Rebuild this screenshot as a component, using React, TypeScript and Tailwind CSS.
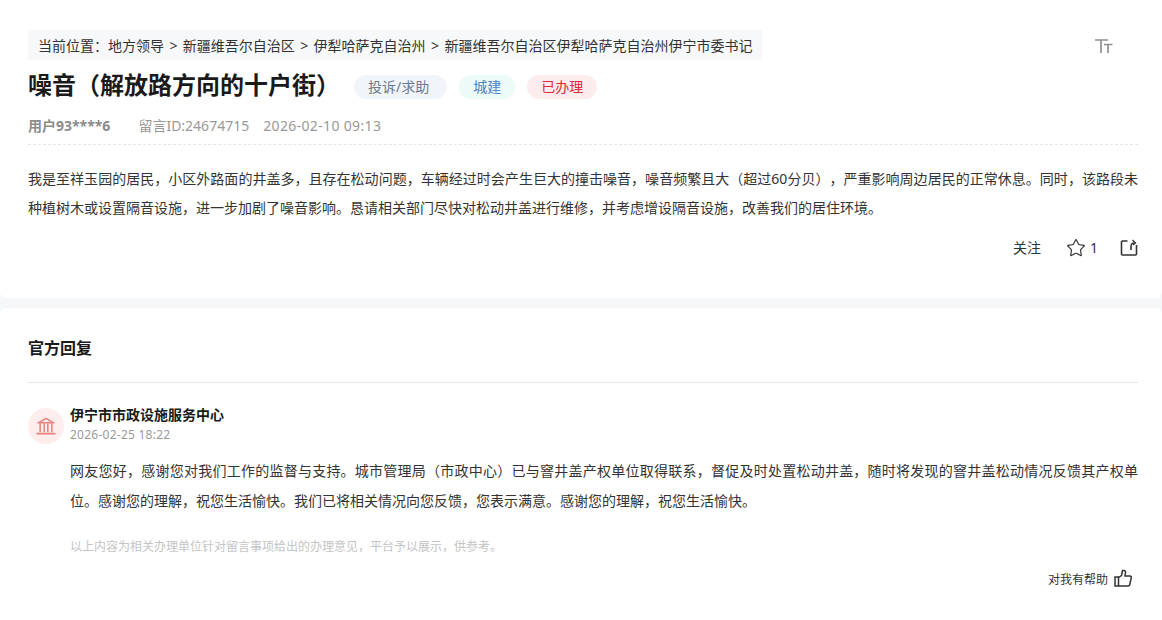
import { Star } from "lucide-react";

const font = { fontFamily: '"Noto Sans", "Noto Sans CJK SC", sans-serif' };

function Crumb({ children }: { children: React.ReactNode }) {
  return <span>{children}</span>;
}

export default function App() {
  return (
    <div style={font} className="w-[1162px] h-[620px] overflow-hidden bg-[#f6f7f9] text-[#222] [text-spacing-trim:space-all]">
      {/* Question */}
      <div className="h-[298px] bg-white rounded-b-[6px] pl-7 pr-6 pt-[30px]">
        <div className="flex items-start justify-between">
          <div className="h-[30px] flex items-center gap-[5.4px] bg-[#f7f8fa] px-[10px] text-[14px] text-[#333] whitespace-nowrap">
            <Crumb>当前位置：地方领导</Crumb>
            <span>&gt;</span>
            <Crumb>新疆维吾尔自治区</Crumb>
            <span>&gt;</span>
            <Crumb>伊犁哈萨克自治州</Crumb>
            <span>&gt;</span>
            <Crumb>新疆维吾尔自治区伊犁哈萨克自治州伊宁市委书记</Crumb>
          </div>
          <svg width="20" height="16" viewBox="0 0 20 16" className="mt-[8px] mr-[24px] text-[#8f8f8f]" fill="none" stroke="currentColor" strokeWidth="1.7">
            <path d="M1 2h13M7 2v13M10 6.500h8.500M14 6.500V15" />
          </svg>
        </div>

        <div className="flex items-center mt-[9px] h-[32px]">
          <h1 className="text-[24px] font-bold text-[#1a1a1a] leading-8 whitespace-nowrap">噪音（解放路方向的十户街）</h1>
          <div className="flex items-center gap-3 ml-[14px] mt-[4px] text-[14px]">
            <span className="h-6 leading-6 pl-[14px] pr-[18px] rounded-full bg-[#f1f4f9] text-[#6b7a90]">投诉/求助</span>
            <span className="h-6 leading-6 px-[14px] rounded-full bg-[#ecfbf8] text-[#4d80c4]">城建</span>
            <span className="h-6 leading-6 px-[14px] rounded-full bg-[#fcecee] text-[#e0273c]">已办理</span>
          </div>
        </div>

        <div className="flex items-center mt-[14px] h-5 text-[14px] text-[#999]">
          <span className="font-bold text-[#8c8c8c]">用户93****6</span>
          <span className="ml-7">留言ID:24674715</span>
          <span className="ml-[14px] tracking-[0.35px]">2026-02-10 09:13</span>
        </div>

        <div className="mt-[9px] border-b border-dashed border-[#e6e6e6]" />

        <p className="mt-[19px] text-[14px] leading-[29px] text-[#333] text-justify">
          我是至祥玉园的居民，小区外路面的井盖多，且存在松动问题，车辆经过时会产生巨大的撞击噪音，噪音频繁且大（超过60分贝），严重影响周边居民的正常休息。同时，该路段未种植树木或设置隔音设施，进一步加剧了噪音影响。恳请相关部门尽快对松动井盖进行维修，并考虑增设隔音设施，改善我们的居住环境。
        </p>

        <div className="flex items-center justify-end mt-[15px] text-[14px] text-[#333]">
          <span>关注</span>
          <Star size={20} strokeWidth={1.4} className="ml-[25px]" />
          <span className="ml-[4px]">1</span>
          <svg width="18" height="18" viewBox="0 0 18 18" className="ml-[22px]" fill="none" stroke="#333" strokeWidth="1.6">
            <path d="M7.500 2H2.500a1 1 0 0 0-1 1v12a1 1 0 0 0 1 1h13a1 1 0 0 0 1-1V6" />
            <path d="M11 11V7.500c0-2 1.200-3.500 3-3.500" />
            <path d="M12.500 1l3 3-2.500 2" strokeWidth="1.300" />
          </svg>
        </div>
      </div>

      {/* Official reply */}
      <div className="h-[312px] mt-[10px] bg-white rounded-t-[6px] pl-7 pr-6">
        <div className="h-[75px] flex items-center border-b border-[#e6e6e6] pt-[5px]">
          <h2 className="text-[16px] font-bold text-[#1a1a1a]">官方回复</h2>
        </div>

        <div className="flex items-center mt-[23px] h-[40px]">
          <div className="w-9 h-9 rounded-full bg-[#fdeded] flex items-center justify-center">
            <svg width="20" height="18" viewBox="0 0 22 20" fill="none" stroke="#e8827c" strokeWidth="1.700">
              <path d="M1.500 6.500h19M3.500 6 11 1.500 18.500 6" />
              <path d="M4.500 7v10M9 7v10M13 7v10M17.500 7v10" />
              <path d="M0.500 18.500h21" strokeWidth="2" />
            </svg>
          </div>
          <div className="ml-[6px]">
            <div className="text-[14px] font-bold leading-[17px] text-[#1a1a1a]">伊宁市市政设施服务中心</div>
            <div className="text-[12px] leading-[23px] text-[#999] tracking-[0.25px]">2026-02-25 18:22</div>
          </div>
        </div>

        <p className="ml-[42px] mt-[10px] text-[14px] leading-[30px] text-[#333] text-justify">
          网友您好，感谢您对我们工作的监督与支持。城市管理局（市政中心）已与窨井盖产权单位取得联系，督促及时处置松动井盖，随时将发现的窨井盖松动情况反馈其产权单位。感谢您的理解，祝您生活愉快。我们已将相关情况向您反馈，您表示满意。感谢您的理解，祝您生活愉快。
        </p>

        <p className="ml-[42px] mt-[21px] text-[12px] leading-5 text-[#c4c4c4]">
          以上内容为相关办理单位针对留言事项给出的办理意见，平台予以展示，供参考。
        </p>

        <div className="flex items-center justify-end mt-[14px] mr-[6px] text-[12px] text-[#333]">
          <span>对我有帮助</span>
          <svg width="18" height="18" viewBox="0 0 18 18" className="ml-[6px] -mt-[4px]" fill="none" stroke="#333" strokeWidth="1.500">
            <path d="M1 8h3.500v9H1z" />
            <path d="M4.500 8.500 7.500 6.500 8.500 1.500h1.500c1 0 1.500.8 1.500 2L11 7h5c1 0 1.500.7 1.300 1.500l-1.500 7c-.2.9-.8 1.500-1.800 1.500H4.500" />
          </svg>
        </div>
      </div>
    </div>
  );
}
